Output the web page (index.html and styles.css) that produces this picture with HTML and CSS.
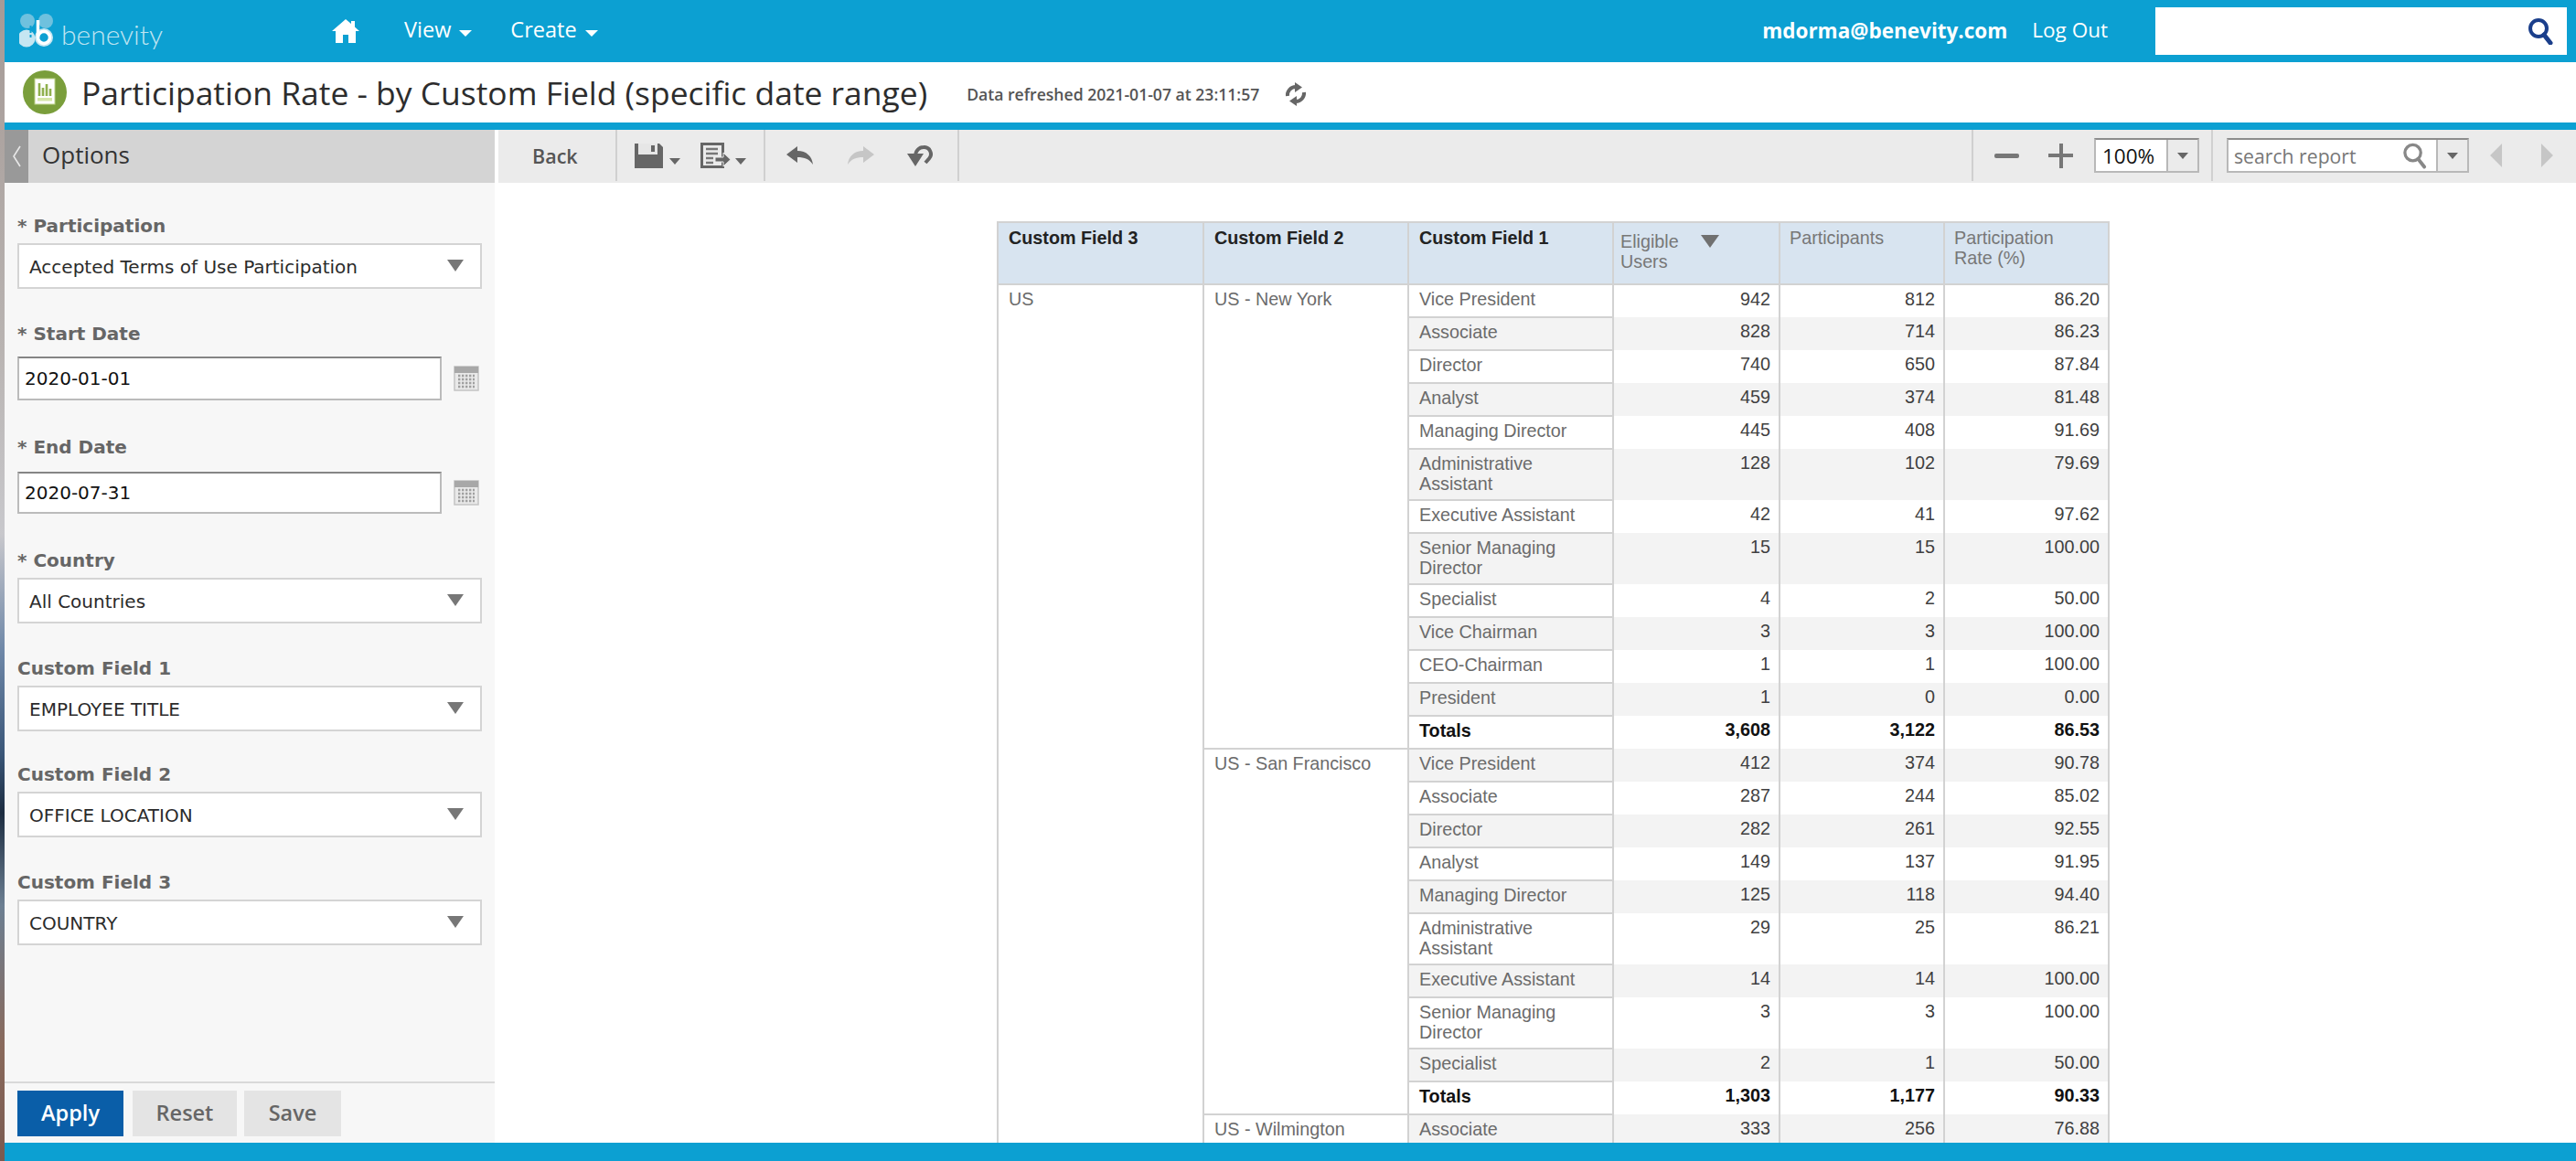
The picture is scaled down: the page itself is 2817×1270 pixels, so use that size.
FILE: index.html
```html
<!DOCTYPE html>
<html lang="en">
<head>
<meta charset="utf-8">
<title>Participation Rate - by Custom Field</title>
<link rel="stylesheet" href="styles.css">
</head>
<body>
<div class="app">
  <header class="topbar">
    <div class="logo">
      <svg class="logo-mark" viewBox="0 0 38 38">
        <circle cx="9" cy="8" r="8" fill="#6fc1de"/>
        <circle cx="29" cy="8" r="8" fill="#6fc1de"/>
        <circle cx="8" cy="27" r="9.5" fill="#c5e6f2"/>
        <circle cx="27" cy="26" r="10" fill="#c5e6f2"/>
        <path d="M12.5 13v15" stroke="#0ca0d2" stroke-width="2" stroke-dasharray="3 2"/>
        <circle cx="27" cy="26" r="6.5" fill="#0ca0d2" stroke="#fff" stroke-width="3.5"/>
        <path d="M20.5 7v19" stroke="#fff" stroke-width="3.5" fill="none"/>
      </svg>
      <span class="logo-text">benevity</span>
    </div>
    <nav class="nav">
      <svg class="home" viewBox="0 0 30 28"><path d="M15 1 0 14h4v13h8v-9h6v9h8V14h4l-5-4.4V3h-4v3z" fill="#fff"/></svg>
      <span class="nav-item nav-view">View<i class="caret"></i></span>
      <span class="nav-item">Create<i class="caret"></i></span>
    </nav>
    <div class="user">mdorma@benevity.com</div>
    <div class="logout">Log Out</div>
    <div class="topsearch">
      <svg class="topsearch-icon" viewBox="0 0 28 30"><circle cx="12" cy="12" r="9" fill="none" stroke="#1b3f8b" stroke-width="4"/><path d="m18 19 7 9" stroke="#1b3f8b" stroke-width="5" stroke-linecap="round"/></svg>
    </div>
  </header>

  <div class="titlebar">
    <svg class="report-icon" viewBox="0 0 48 48">
      <circle cx="24" cy="24" r="24" fill="#7a9e3b"/>
      <rect x="13" y="9" width="22" height="28" fill="#fff" stroke="#b9d086" stroke-width="1"/>
      <path d="M18 14v14M22 19v9M26 15v13M30 20v8" stroke="#8fb04d" stroke-width="2.6"/>
      <rect x="16" y="30" width="16" height="3.5" fill="#d5e6a8"/>
    </svg>
    <h1 class="title">Participation Rate - by Custom Field (specific date range)</h1>
    <span class="refreshed">Data refreshed 2021-01-07 at 23:11:57</span>
    <svg class="refresh" viewBox="0 0 26 26">
      <g>
        <path d="M4 15A9 9 0 0 1 13 5" fill="none" stroke="#666" stroke-width="4"/>
        <path d="m12 0 8 5.500-8 5.500z" fill="#666"/>
      </g>
      <g transform="rotate(180 13 13)">
        <path d="M4 15A9 9 0 0 1 13 5" fill="none" stroke="#666" stroke-width="4"/>
        <path d="m12 0 8 5.500-8 5.500z" fill="#666"/>
      </g>
    </svg>
  </div>

  <div class="workspace">
    <aside class="sidebar">
      <div class="options-head">
        <span class="collapse"><svg viewBox="0 0 12 26"><path d="M10 2 3 13l7 11" fill="none" stroke="#e8e8e8" stroke-width="1.6"/></svg></span>
        <span class="options-title">Options</span>
      </div>
      <form class="form">
        <div class="field">
          <label class="label">* Participation</label>
          <div class="select">Accepted Terms of Use Participation<i class="select-arrow"></i></div>
        </div>
        <div class="field field-start">
          <label class="label label-date1">* Start Date</label>
          <div class="date-row">
            <input class="date" value="2020-01-01" readonly>
            <svg class="cal" viewBox="0 0 28 28"><rect x="1" y="1" width="26" height="26" fill="#e9e9e9" stroke="#c4c4c4" stroke-width="1.5"/><rect x="1" y="1" width="26" height="7" fill="#a8a8a8"/><path d="M5 11h18M5 15h18M5 19h18M5 23h18" stroke="#a0a0a0" stroke-width="2.4" stroke-dasharray="2.4 1.6"/></svg>
          </div>
        </div>
        <div class="field field-end">
          <label class="label label-date2">* End Date</label>
          <div class="date-row">
            <input class="date date-end" value="2020-07-31" readonly>
            <svg class="cal" viewBox="0 0 28 28"><rect x="1" y="1" width="26" height="26" fill="#e9e9e9" stroke="#c4c4c4" stroke-width="1.5"/><rect x="1" y="1" width="26" height="7" fill="#a8a8a8"/><path d="M5 11h18M5 15h18M5 19h18M5 23h18" stroke="#a0a0a0" stroke-width="2.4" stroke-dasharray="2.4 1.6"/></svg>
          </div>
        </div>
        <div class="field field-country">
          <label class="label">* Country</label>
          <div class="select">All Countries<i class="select-arrow"></i></div>
        </div>
        <div class="field field-cf1">
          <label class="label">Custom Field 1</label>
          <div class="select">EMPLOYEE TITLE<i class="select-arrow"></i></div>
        </div>
        <div class="field field-cf2">
          <label class="label">Custom Field 2</label>
          <div class="select">OFFICE LOCATION<i class="select-arrow"></i></div>
        </div>
        <div class="field field-cf3">
          <label class="label">Custom Field 3</label>
          <div class="select">COUNTRY<i class="select-arrow"></i></div>
        </div>
      </form>
      <div class="actions">
        <button class="btn btn-apply" type="button">Apply</button>
        <button class="btn btn-reset" type="button">Reset</button>
        <button class="btn btn-save" type="button">Save</button>
      </div>
    </aside>

    <main class="main">
      <div class="toolbar">
        <div class="tb-group tb-back"><span class="back">Back</span></div>
        <div class="tb-group tb-file">
          <svg class="tb-save" viewBox="0 0 31 27"><path d="M0 0h27l4 4v23H0z" fill="#666"/><rect x="4" y="0" width="21" height="12" fill="#e6e6e6"/><rect x="18" y="2" width="4" height="7" fill="#666"/></svg>
          <i class="mini-caret"></i>
          <svg class="tb-export" viewBox="0 0 33 28"><path d="M1.500 1.500h23v25h-23z" fill="#ebebeb" stroke="#666" stroke-width="3"/><path d="M6 7h13M6 12h13M6 17h8M6 22h8" stroke="#777" stroke-width="2.600"/><path d="M16 16h9v-5l8 7.500-8 7.500v-5h-9z" fill="#666" stroke="#ebebeb" stroke-width="1"/></svg>
          <i class="mini-caret mini-caret-export"></i>
        </div>
        <div class="tb-group tb-history">
          <svg class="tb-undo" viewBox="0 0 30 20"><path d="M0 9 12 0v5c10 0 16 6 17 15-4-6-9-8-17-8v6z" fill="#666"/></svg>
          <svg class="tb-undo tb-redo" viewBox="0 0 30 20"><path d="M30 9 18 0v5C8 5 2 11 1 20c4-6 9-8 17-8v6z" fill="#c6c6c6"/></svg>
          <svg class="tb-loop" viewBox="0 0 28 24"><path d="M9 13C9 7 13 3 18 3a7.500 7.500 0 0 1 6 12.500L20 20" fill="none" stroke="#666" stroke-width="4"/><path d="M0 10h18l-9 14z" fill="#666"/></svg>
        </div>
        <div class="tb-spacer"></div>
        <div class="tb-group tb-zoom">
          <span class="zoom-minus"></span>
          <span class="zoom-plus"></span>
          <div class="combo combo-zoom"><span class="combo-text zoom-value">100%</span><span class="combo-btn"><i class="mini-caret"></i></span></div>
        </div>
        <div class="tb-group tb-search">
          <div class="combo combo-search"><span class="combo-text search-text">search report</span>
            <svg class="search-mag" viewBox="0 0 28 30"><circle cx="12" cy="12" r="9" fill="none" stroke="#888" stroke-width="3.4"/><path d="m18 19 7 9" stroke="#888" stroke-width="4" stroke-linecap="round"/></svg>
            <span class="combo-btn"><i class="mini-caret"></i></span></div>
          <svg class="nav-arrow" viewBox="0 0 16 30"><path d="M15 0v30L0 15z" fill="#c6c6c6"/></svg>
          <svg class="nav-arrow nav-next" viewBox="0 0 16 30"><path d="M1 0v30l15-15z" fill="#c6c6c6"/></svg>
        </div>
      </div>

      <div class="report">
        <table class="grid">
          <colgroup>
            <col class="c1"><col class="c2"><col class="c3"><col class="c4"><col class="c5"><col class="c6">
          </colgroup>
          <thead>
            <tr>
              <th class="h-dim">Custom Field 3</th>
              <th class="h-dim">Custom Field 2</th>
              <th class="h-dim">Custom Field 1</th>
              <th class="h-meas h-sort">Eligible<i class="sort"></i><br>Users</th>
              <th class="h-meas">Participants</th>
              <th class="h-meas">Participation<br>Rate (%)</th>
            </tr>
          </thead>
          <tbody>
            <tr><td class="grp" rowspan="24">US</td><td class="grp" rowspan="13">US - New York</td><td class="lb">Vice President</td><td class="n">942</td><td class="n">812</td><td class="n">86.20</td></tr>
            <tr><td class="lb">Associate</td><td class="n">828</td><td class="n">714</td><td class="n">86.23</td></tr>
            <tr><td class="lb">Director</td><td class="n">740</td><td class="n">650</td><td class="n">87.84</td></tr>
            <tr><td class="lb">Analyst</td><td class="n">459</td><td class="n">374</td><td class="n">81.48</td></tr>
            <tr><td class="lb">Managing Director</td><td class="n">445</td><td class="n">408</td><td class="n">91.69</td></tr>
            <tr class="tall"><td class="lb">Administrative Assistant</td><td class="n">128</td><td class="n">102</td><td class="n">79.69</td></tr>
            <tr><td class="lb">Executive Assistant</td><td class="n">42</td><td class="n">41</td><td class="n">97.62</td></tr>
            <tr class="tall"><td class="lb">Senior Managing Director</td><td class="n">15</td><td class="n">15</td><td class="n">100.00</td></tr>
            <tr><td class="lb">Specialist</td><td class="n">4</td><td class="n">2</td><td class="n">50.00</td></tr>
            <tr><td class="lb">Vice Chairman</td><td class="n">3</td><td class="n">3</td><td class="n">100.00</td></tr>
            <tr><td class="lb">CEO-Chairman</td><td class="n">1</td><td class="n">1</td><td class="n">100.00</td></tr>
            <tr><td class="lb">President</td><td class="n">1</td><td class="n">0</td><td class="n">0.00</td></tr>
            <tr class="total"><td class="lb">Totals</td><td class="n">3,608</td><td class="n">3,122</td><td class="n">86.53</td></tr>
            <tr><td class="grp" rowspan="10">US - San Francisco</td><td class="lb">Vice President</td><td class="n">412</td><td class="n">374</td><td class="n">90.78</td></tr>
            <tr><td class="lb">Associate</td><td class="n">287</td><td class="n">244</td><td class="n">85.02</td></tr>
            <tr><td class="lb">Director</td><td class="n">282</td><td class="n">261</td><td class="n">92.55</td></tr>
            <tr><td class="lb">Analyst</td><td class="n">149</td><td class="n">137</td><td class="n">91.95</td></tr>
            <tr><td class="lb">Managing Director</td><td class="n">125</td><td class="n">118</td><td class="n">94.40</td></tr>
            <tr class="tall"><td class="lb">Administrative Assistant</td><td class="n">29</td><td class="n">25</td><td class="n">86.21</td></tr>
            <tr><td class="lb">Executive Assistant</td><td class="n">14</td><td class="n">14</td><td class="n">100.00</td></tr>
            <tr class="tall"><td class="lb">Senior Managing Director</td><td class="n">3</td><td class="n">3</td><td class="n">100.00</td></tr>
            <tr><td class="lb">Specialist</td><td class="n">2</td><td class="n">1</td><td class="n">50.00</td></tr>
            <tr class="total"><td class="lb">Totals</td><td class="n">1,303</td><td class="n">1,177</td><td class="n">90.33</td></tr>
            <tr><td class="grp">US - Wilmington</td><td class="lb">Associate</td><td class="n">333</td><td class="n">256</td><td class="n">76.88</td></tr>
          </tbody>
        </table>
      </div>
    </main>
  </div>
  <footer class="footer"></footer>
</div>
</body>
</html>
```

FILE: styles.css
```css
* { box-sizing: border-box; }
html, body { height: 100%; }
body {
  margin: 0;
  overflow: hidden;
  background: linear-gradient(180deg, #a59a96 0, #b9b4b2 30%, #c8c8cc 46%, #6f88a8 56%, #3a5678 65%, #1c2c40 70%, #6c7f92 78%, #8a6a5c 90%, #7a5a50 100%);
}
.app {
  margin-left: 5px;
  height: 100%;
  display: flex;
  flex-direction: column;
  background: #fff;
}

/* top bar */
.topbar {
  height: 68px;
  flex: none;
  background: #0ca0d2;
  display: flex;
  align-items: center;
  font-family: "Open Sans", sans-serif;
  color: #fff;
  position: relative;
}
.logo { display: flex; align-items: center; margin-left: 16px; width: 342px; }
.logo-mark { width: 38px; height: 38px; }
.logo-text {
  margin-left: 8px;
  font-family: "Lato", sans-serif;
  font-weight: 300;
  font-size: 30px;
  color: #bfe4f1;
  line-height: 40px;
  padding-top: 6px;
}
.nav { display: flex; align-items: center; }
.home { width: 30px; height: 28px; margin-right: 49px; }
.nav-item { font-size: 23.5px; line-height: 30px; display: flex; align-items: center; padding-bottom: 4px; }
.nav-view { margin-right: 42px; }
.caret {
  display: inline-block;
  margin-left: 9px;
  margin-top: 8px;
  border-style: solid;
  border-width: 7px 7px 0;
  border-color: #fff transparent transparent;
}
.user { margin-left: auto; font-size: 22.5px; font-weight: 700; padding-bottom: 2px; }
.logout { margin-left: 27px; font-size: 22.5px; margin-right: 52px; padding-bottom: 4px; }
.topsearch {
  width: 450px;
  height: 52px;
  background: #fff;
  margin-right: 10px;
  display: flex;
  align-items: center;
  justify-content: flex-end;
  padding-right: 15px;
}
.topsearch-icon { width: 28px; height: 30px; }

/* title */
.titlebar {
  height: 74px;
  flex: none;
  border-bottom: 8px solid #0ca0d2;
  display: flex;
  align-items: center;
  font-family: "Open Sans", sans-serif;
}
.report-icon { width: 48px; height: 48px; margin-left: 20px; }
.title {
  margin: 0 0 0 16px;
  font-size: 35.45px;
  font-weight: 400;
  color: #2d2d2d;
  white-space: nowrap;
}
.refreshed {
  margin-left: 43px;
  font-size: 17.6px;
  font-weight: 600;
  color: #555;
  padding-top: 4px;
}
.refresh { width: 26px; height: 26px; margin-left: 27px; margin-top: 4px; }

/* workspace */
.workspace { flex: 1; min-height: 0; display: flex; }
.sidebar {
  width: 536px;
  flex: none;
  background: #f7f7f7;
  display: flex;
  flex-direction: column;
  margin-right: 4px;
  font-family: "DejaVu Sans", sans-serif;
}
.options-head {
  height: 58px;
  flex: none;
  background: #d4d4d4;
  display: flex;
  align-items: center;
  font-family: "Open Sans", sans-serif;
}
.collapse {
  width: 26px;
  height: 100%;
  background: #999;
  display: flex;
  align-items: center;
  justify-content: center;
}
.collapse svg { width: 12px; height: 26px; }
.options-title { margin-left: 15px; font-size: 26px; color: #333; margin-top: -4px; }
.form { flex: 1; min-height: 0; padding: 35px 14px 0; }
.field-start { margin-top: 37px; }
.field-end { margin-top: 39px; }
.field-country { margin-top: 39px; }
.field-cf1 { margin-top: 37px; }
.field-cf2 { margin-top: 35px; }
.field-cf3 { margin-top: 37px; }
.label {
  display: block;
  height: 24px;
  line-height: 24px;
  font-size: 20px;
  font-weight: 700;
  color: #666;
  margin-bottom: 7px;
}
.label-date1 { margin-bottom: 13px; }
.label-date2 { margin-bottom: 15px; }
.select {
  width: 508px;
  height: 50px;
  background: #fff;
  border: 2px solid #d4d4d4;
  padding-left: 11px;
  padding-top: 2px;
  display: flex;
  align-items: center;
  justify-content: space-between;
  font-size: 20px;
  color: #2b2b2b;
}
.select-arrow {
  margin-right: 18px;
  margin-top: -3px;
  border-style: solid;
  border-width: 13px 9px 0;
  border-color: #777 transparent transparent;
}
.date-row { display: flex; align-items: center; }
.date {
  width: 464px;
  height: 48px;
  border: 2px solid #bbb;
  border-top-color: #858585;
  border-radius: 0;
  padding: 0 6px;
  font-family: "DejaVu Sans", sans-serif;
  font-size: 20px;
  color: #111;
  background: #fff;
  outline: none;
}
.date-end { height: 46px; }
.cal { width: 28px; height: 28px; margin-left: 13px; }
.actions {
  height: 67px;
  flex: none;
  border-top: 2px solid #d9d9d9;
  padding: 8px 14px 0;
  display: flex;
  align-items: flex-start;
}
.btn {
  height: 50px;
  border: 0;
  padding: 0 0 2px;
  font-family: "Open Sans", sans-serif;
  font-size: 23.5px;
  font-weight: 600;
  color: #666;
  background: #e4e4e4;
}
.btn-apply { width: 116px; background: #0a5ea8; color: #fff; margin-right: 10px; }
.btn-reset { width: 114px; margin-right: 8px; }
.btn-save { width: 106px; }

/* toolbar */
.main { flex: 1; min-width: 0; display: flex; flex-direction: column; font-family: "Open Sans", sans-serif; }
.toolbar {
  height: 58px;
  flex: none;
  background: #ebebeb;
  display: flex;
}
.tb-group {
  height: 56px;
  display: flex;
  align-items: center;
  border-right: 2px solid #d0d0d0;
}
.tb-back { width: 130px; padding-left: 37px; }
.back { font-size: 21.5px; font-weight: 600; color: #555; }
.tb-file { width: 162px; padding-left: 19px; }
.tb-save { width: 31px; height: 27px; flex: none; }
.tb-export { width: 33px; height: 28px; flex: none; margin-left: 22px; }
.mini-caret {
  display: inline-block;
  border-style: solid;
  border-width: 7px 6px 0;
  border-color: #666 transparent transparent;
  margin: 12px 0 0 7px;
}
.mini-caret-export { margin-left: 5px; }
.tb-history { width: 212px; padding-left: 23px; }
.tb-undo { width: 30px; height: 20px; margin-right: 36px; }
.tb-loop { width: 28px; height: 24px; }
.tb-spacer { flex: 1; }
.tb-zoom { width: 264px; border-left: 2px solid #d0d0d0; padding-left: 23px; }
.zoom-minus { width: 27px; height: 5px; background: #777; border-radius: 2px; }
.zoom-plus { width: 27px; height: 27px; margin-left: 32px; background: linear-gradient(#777,#777) center/100% 4px no-repeat, linear-gradient(#777,#777) center/4px 100% no-repeat; }
.combo {
  height: 38px;
  background: #fff;
  border: 2px solid #b8b8b8;
  border-top-color: #8c8c8c;
  display: flex;
  align-items: center;
}
.combo-zoom { width: 115px; margin-left: 23px; }
.combo-text { flex: 1; padding-left: 7px; white-space: nowrap; }
.zoom-value { color: #111; font-size: 22.5px; }
.combo-btn { width: 34px; height: 100%; flex: none; border-left: 2px solid #b8b8b8; background: #ebebeb; display: flex; align-items: center; justify-content: center; }
.combo-btn .mini-caret { margin: 0; }
.tb-search { flex: none; width: 397px; border-right: 0; padding-left: 15px; }
.combo-search { width: 265px; }
.search-text { color: #777; font-size: 21.2px; padding-left: 6px; }
.search-mag { width: 27px; height: 30px; margin-right: 10px; flex: none; }
.nav-arrow { width: 16px; height: 26px; margin-left: 22px; }
.nav-next { margin-left: 39px; }

/* report */
.report { flex: 1; min-height: 0; overflow: hidden; padding: 42px 0 0 545px; }
.grid {
  table-layout: fixed;
  border-collapse: collapse;
  width: 1217px;
  font-family: "Liberation Sans", Arial, sans-serif;
  font-size: 19.75px;
  line-height: 22px;
}
.c1 { width: 225px; } .c2 { width: 224px; } .c3 { width: 224px; }
.c4 { width: 182px; } .c5 { width: 180px; } .c6 { width: 180px; }
.grid th, .grid td {
  border-left: 2px solid #d2d2d2;
  border-right: 2px solid #d2d2d2;
  vertical-align: top;
  padding: 5px 9px 5px 11px;
}
.grid td { padding-top: 4px; padding-bottom: 4px; }
.grid th {
  height: 68px;
  background: #d8e4f0;
  border-top: 2px solid #d2d2d2;
  border-bottom: 2px solid #d2d2d2;
  text-align: left;
  font-weight: 400;
  color: #777;
}
.grid .h-meas { padding-left: 10px; }
.grid .h-dim { font-weight: 700; color: #222; }
.grid .h-sort { padding-top: 9px; padding-left: 7px; position: relative; }
.sort {
  position: absolute;
  left: 95px;
  top: 13px;
  border-style: solid;
  border-width: 14px 10px 0;
  border-color: #707070 transparent transparent;
}
.grid tbody tr { height: 36px; }
.grid tbody tr.tall { height: 56px; }
.grid td { color: #6b6b6b; }
.grid .lb { border-top: 2px solid #d2d2d2; border-bottom: 2px solid #d2d2d2; }
.grid .grp { border-top: 2px solid #d2d2d2; border-bottom: 2px solid #d2d2d2; background: #fff; }
.grid .n { text-align: right; color: #3f3f3f; }
.grid tbody tr:nth-child(even) td:not(.grp) { background: #f3f3f3; }
.grid .total td { font-weight: 700; color: #111; }

.footer { height: 20px; flex: none; background: #0ca0d2; }
```
